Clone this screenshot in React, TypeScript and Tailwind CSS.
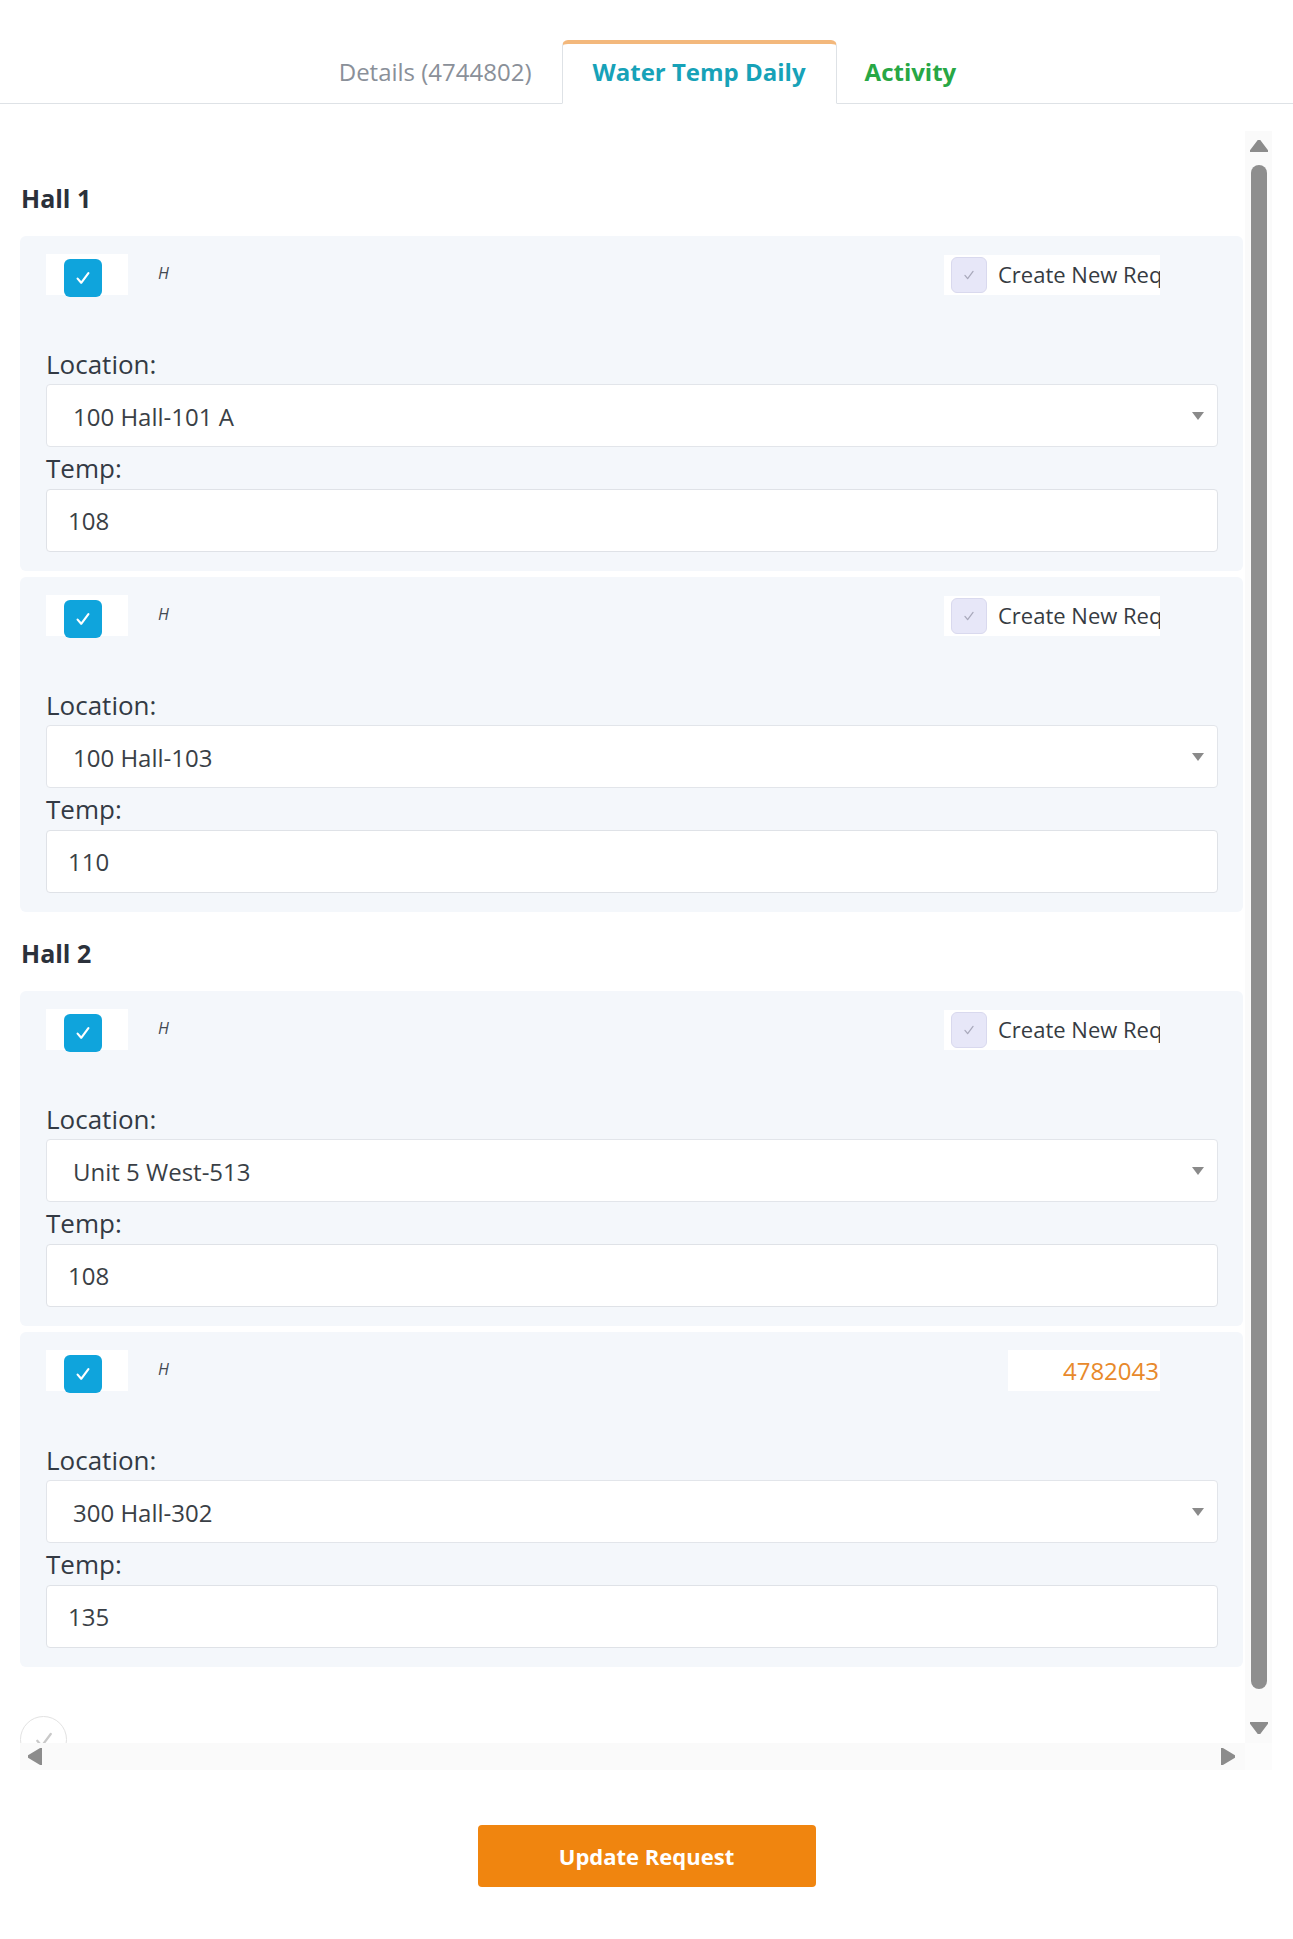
import React from "react";

type Entry = {
  location: string;
  temp: string;
  request?: string;
};

const halls: { name: string; entries: Entry[] }[] = [
  {
    name: "Hall 1",
    entries: [
      { location: "100 Hall-101 A", temp: "108" },
      { location: "100 Hall-103", temp: "110" },
    ],
  },
  {
    name: "Hall 2",
    entries: [
      { location: "Unit 5 West-513", temp: "108" },
      { location: "300 Hall-302", temp: "135", request: "4782043" },
    ],
  },
];

function CheckMark({ className, stroke, width = 2 }: { className?: string; stroke: string; width?: number }) {
  return (
    <svg viewBox="0 0 20 20" className={className} fill="none">
      <path d="M5.5 10.5l3 3.5L14.5 6" stroke={stroke} strokeWidth={width} strokeLinecap="round" strokeLinejoin="round" />
    </svg>
  );
}

function Triangle({ dir }: { dir: "up" | "down" | "left" | "right" }) {
  const pts = {
    up: "9,0 18,12 0,12",
    down: "0,0 18,0 9,12",
    left: "14,0 14,17 0,8.5",
    right: "0,0 14,8.5 0,17",
  }[dir];
  const size = dir === "up" || dir === "down" ? "w-[18px] h-[12px]" : "w-[14px] h-[17px]";
  const vb = dir === "up" || dir === "down" ? "0 0 18 12" : "0 0 14 17";
  return (
    <svg viewBox={vb} className={size}>
      <polygon points={pts} fill="#8c8c8c" strokeLinejoin="round" stroke="#8c8c8c" strokeWidth="2" />
    </svg>
  );
}

function EntryCard({ entry }: { entry: Entry }) {
  return (
    <div className="w-[1223px] rounded-[6px] bg-[#f4f7fb] pl-[26px] pr-[25px] pt-[18px] pb-[19px]">
      <div className="flex items-center justify-between">
        <div className="flex items-center">
          <div className="flex h-[41px] w-[82px] items-start bg-white pl-[18px] pt-[5px]">
            <div className="flex h-[38px] w-[38px] items-center justify-center rounded-[6px] bg-[#0fa4dc]">
              <CheckMark className="h-[24px] w-[24px]" stroke="#ffffff" width={1.8} />
            </div>
          </div>
          <span className="ml-[30px] -mt-[3px] text-[16px] italic text-[#444a52]">H</span>
        </div>
        {entry.request ? (
          <div className="mr-[58px] flex h-[41px] w-[152px] items-center justify-end bg-white pr-[1px] text-[24px] text-[#e8892b]">
            {entry.request}
          </div>
        ) : (
          <div className="mr-[58px] flex h-[40px] w-[216px] items-center overflow-hidden whitespace-nowrap bg-white pl-[7px]">
            <div className="flex h-[36px] w-[36px] shrink-0 items-center justify-center rounded-[6px] border border-[#d9d9ee] bg-[#e7e7f8]">
              <CheckMark className="h-[18px] w-[18px]" stroke="#a9a9bb" width={1.4} />
            </div>
            <span className="ml-[11px] text-[22px] text-[#363b42]">Create New Req</span>
          </div>
        )}
      </div>

      <div className="mt-[51px] text-[26px] leading-[36px] text-[#333a44]">Location:</div>
      <div className="mt-[2px] flex h-[63px] items-center justify-between rounded-[4px] border border-[#e2e5ea] bg-white pl-[26px] pr-[13px] pt-[3px]">
        <span className="text-[24px] text-[#3a3f46]">{entry.location}</span>
        <svg viewBox="0 0 12 8" className="-mt-[3px] h-[8px] w-[12px]">
          <polygon points="0,0 12,0 6,8" fill="#8a8a8a" />
        </svg>
      </div>

      <div className="mt-[3px] text-[26px] leading-[36px] text-[#333a44]">Temp:</div>
      <div className="mt-[3px] flex h-[63px] items-center rounded-[4px] border border-[#dfe2e7] bg-white pl-[21px]">
        <span className="text-[24px] text-[#3a3f46]">{entry.temp}</span>
      </div>
    </div>
  );
}

export default function App() {
  return (
    <div className="min-h-[1939px] bg-white font-['Open_Sans',sans-serif]">
      {/* tabs */}
      <div className="flex justify-center border-b border-[#dee2e6] pt-[40px]">
        <div className="flex h-[63px] items-center px-[30px] text-[24px] text-[#8a9099]">Details (4744802)</div>
        <div className="-mb-px flex h-[64px] items-center rounded-t-[6px] border border-t-[4px] border-[#dee2e6] border-t-[#f3b87c] border-b-white bg-white px-[30px] pb-[4px] text-[24px] font-bold text-[#17a2b8]">
          Water Temp Daily
        </div>
        <div className="flex h-[63px] items-center px-[28px] text-[24px] font-bold text-[#28a745]">Activity</div>
      </div>

      {/* scroll area */}
      <div className="ml-[20px] mt-[27px] w-[1252px]">
        <div className="flex">
          <div className="h-[1612px] w-[1225px] overflow-hidden pt-[49px]">
            {halls.map((hall, hi) => (
              <div key={hall.name} className={hi > 0 ? "mt-[23px]" : ""}>
                <h2 className="pl-[1px] text-[25px] font-bold leading-[36px] text-[#2b313b]">{hall.name}</h2>
                <div className="mt-[20px] flex flex-col gap-[6px]">
                  {hall.entries.map((e) => (
                    <EntryCard key={e.location} entry={e} />
                  ))}
                </div>
              </div>
            ))}
            <div className="mt-[49px] flex h-[47px] w-[47px] items-center justify-center rounded-full border border-[#e2e2e2] bg-white">
              <CheckMark className="h-[30px] w-[30px]" stroke="#c9c9c9" width={1.5} />
            </div>
          </div>
          <div className="flex h-[1612px] w-[27px] flex-col items-center bg-[#fafafa] pt-[9px]">
            <Triangle dir="up" />
            <div className="mt-[13px] h-[1524px] w-[16px] rounded-full bg-[#8e8e8e]" />
            <div className="mt-[33px]">
              <Triangle dir="down" />
            </div>
          </div>
        </div>
        <div className="flex h-[27px]">
          <div className="flex w-[1225px] items-center justify-between bg-[#fafafa] pl-[8px] pr-[10px]">
            <Triangle dir="left" />
            <Triangle dir="right" />
          </div>
          <div className="w-[27px] bg-[#fcfcfc]" />
        </div>
      </div>

      <div className="mt-[55px] flex justify-center">
        <button className="h-[62px] w-[338px] rounded-[4px] bg-[#f0850f] text-[22px] font-bold text-white">
          Update Request
        </button>
      </div>
    </div>
  );
}
